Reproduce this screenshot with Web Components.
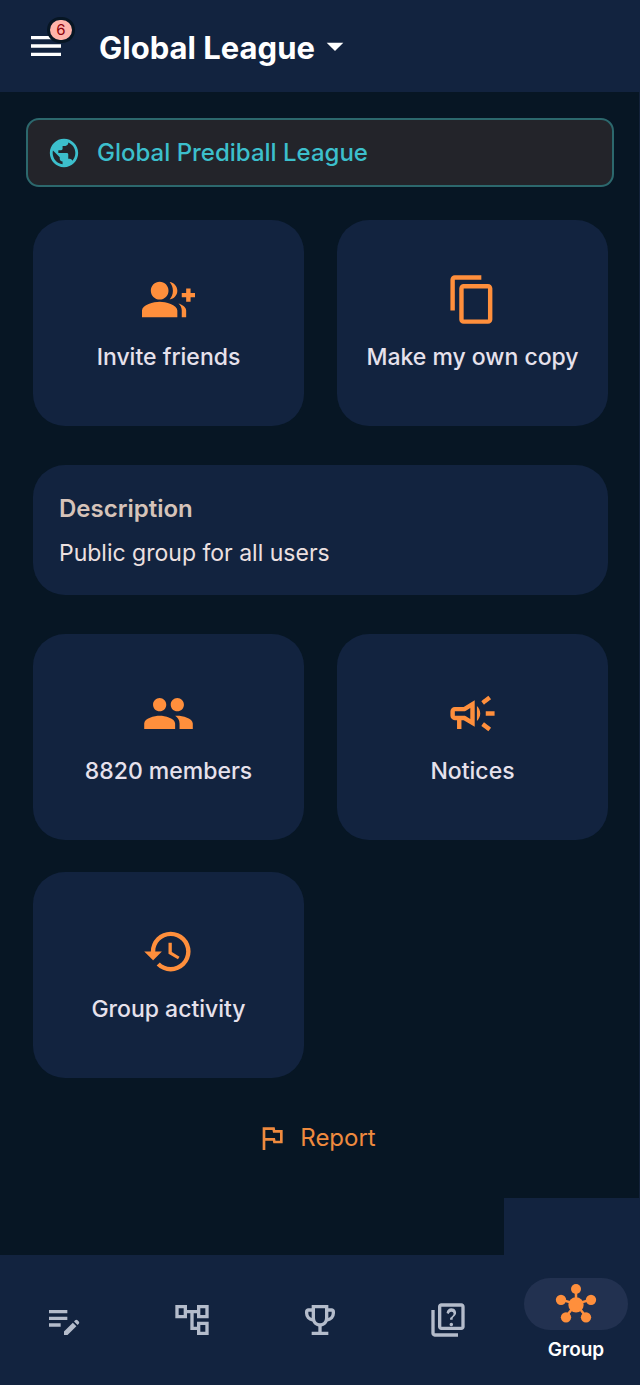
<!DOCTYPE html>
<html lang="en">
<head>
<meta charset="utf-8">
<meta name="viewport" content="width=device-width, initial-scale=1">
<title>Global League</title>
<style>
  :root {
    --bg: #071624;
    --surface: #12233f;
    --accent: #ff8f3c;
    --text: #e6e1ec;
    --muted: #b4bccb;
  }
  body {
    margin: 0;
    min-height: 100vh;
    display: flex;
    flex-direction: column;
    background: var(--bg);
    color: var(--text);
    font-family: Inter, "Open Sans", sans-serif;
  }
  main {
    flex: 1;
    display: flex;
    flex-direction: column;
    padding: 26px 25px 0 26px;
    border-right: 1px solid #13223a;
  }
  .content {
    display: flex;
    flex-direction: column;
    gap: 39px;
    padding: 33px 6px 0 7px;
  }
</style>
</head>
<body>
<league-header count="6">Global League</league-header>
<main>
  <league-banner>Global Prediball League</league-banner>
  <div class="content">
    <tile-grid>
      <action-tile icon="group_add">Invite friends</action-tile>
      <action-tile icon="content_copy">Make my own copy</action-tile>
    </tile-grid>
    <info-card>
      <span slot="title">Description</span>
      Public group for all users
    </info-card>
    <tile-grid>
      <action-tile icon="people">8820 members</action-tile>
      <action-tile icon="campaign">Notices</action-tile>
      <action-tile icon="history">Group activity</action-tile>
    </tile-grid>
  </div>
  <report-button>Report</report-button>
</main>
<bottom-nav>
  <nav-item icon="edit_note" label="Predictions"></nav-item>
  <nav-item icon="account_tree" label="Bracket"></nav-item>
  <nav-item icon="trophy" label="Standings"></nav-item>
  <nav-item icon="quiz" label="Questions"></nav-item>
  <nav-item icon="hub" active>Group</nav-item>
</bottom-nav>

<script>
(function () {
  var ICONS = {
    menu: '<path d="M3 18h18v-2H3v2zm0-5h18v-2H3v2zm0-7v2h18V6H3z"/>',
    arrow: '<path d="M7 10l5 5 5-5z"/>',
    public: '<path d="M12 2C6.48 2 2 6.48 2 12s4.48 10 10 10 10-4.48 10-10S17.52 2 12 2zm-1 17.93c-3.95-.49-7-3.85-7-7.93 0-.62.08-1.21.21-1.79L9 15v1c0 1.1.9 2 2 2v1.93zm6.9-2.54c-.26-.81-1-1.39-1.9-1.39h-1v-3c0-.55-.45-1-1-1H8v-2h2c.55 0 1-.45 1-1V7h2c1.1 0 2-.9 2-2v-.41c2.93 1.19 5 4.06 5 7.41 0 2.08-.8 3.97-2.1 5.39z"/>',
    group_add: '<path d="M22 9V7h-2v2h-2v2h2v2h2v-2h2V9zM8 12c2.21 0 4-1.79 4-4s-1.79-4-4-4-4 1.79-4 4 1.79 4 4 4zm0 1c-2.67 0-8 1.34-8 4v3h16v-3c0-2.66-5.33-4-8-4zm4.51-8.95C13.43 5.11 14 6.49 14 8s-.57 2.89-1.49 3.95C14.47 11.7 16 10.04 16 8s-1.53-3.7-3.49-3.95zm4.02 9.78C17.42 14.66 18 15.7 18 17v3h2v-3c0-1.45-1.59-2.51-3.47-3.17z"/>',
    content_copy: '<path d="M16 1H4c-1.1 0-2 .9-2 2v14h2V3h12V1zm3 4H8c-1.1 0-2 .9-2 2v14c0 1.1.9 2 2 2h11c1.1 0 2-.9 2-2V7c0-1.1-.9-2-2-2zm0 16H8V7h11v14z"/>',
    people: '<path d="M16 11c1.66 0 2.99-1.34 2.99-3S17.66 5 16 5c-1.66 0-3 1.34-3 3s1.34 3 3 3zm-8 0c1.66 0 2.99-1.34 2.99-3S9.66 5 8 5C6.34 5 5 6.34 5 8s1.34 3 3 3zm0 2c-2.33 0-7 1.17-7 3.5V19h14v-2.5c0-2.33-4.67-3.5-7-3.5zm8 0c-.29 0-.62.02-.97.05 1.16.84 1.97 1.97 1.97 3.45V19h6v-2.5c0-2.33-4.67-3.5-7-3.5z"/>',
    campaign: '<path d="M18 11v2h4v-2h-4zM16 17.61c.96.71 2.21 1.65 3.2 2.39.4-.53.8-1.07 1.2-1.6-.99-.74-2.24-1.68-3.2-2.4-.4.54-.8 1.08-1.2 1.61zM20.4 5.6C20 5.07 19.6 4.53 19.2 4c-.99.74-2.24 1.68-3.2 2.4.4.53.8 1.07 1.2 1.6.96-.72 2.21-1.65 3.2-2.4zM4 9c-1.1 0-2 .9-2 2v2c0 1.1.9 2 2 2h1v4h2v-4h1l5 3V6L8 9H4zm5.03 1.71L11 9.53v4.94l-1.97-1.18-.48-.29H4v-2h4.55l.48-.29zM15.5 12c0-1.33-.58-2.53-1.5-3.35v6.69c.92-.81 1.5-2.01 1.5-3.34z"/>',
    history: '<path d="M13 3a9 9 0 0 0-9 9H1l3.89 3.89.07.14L9 12H6c0-3.87 3.13-7 7-7s7 3.13 7 7-3.13 7-7 7c-1.93 0-3.68-.79-4.94-2.06l-1.42 1.42A8.954 8.954 0 0 0 13 21a9 9 0 0 0 0-18zm-1 5v5l4.28 2.54.72-1.21-3.5-2.08V8H12z"/>',
    flag: '<path d="M12.36 6l.4 2H18v6h-3.36l-.4-2H7V6h5.36M14 4H5v17h2v-7h5.6l.4 2h7V6h-5.6L14 4z"/>',
    edit_note: '<path d="M3 10h11v2H3v-2zm0-2h11V6H3v2zm0 8h7v-2H3v2zm15.01-3.13.71-.71a.996.996 0 0 1 1.41 0l.71.71c.39.39.39 1.02 0 1.41l-.71.71-2.12-2.12zm-.71.71-5.3 5.3V21h2.12l5.3-5.3-2.12-2.12z"/>',
    account_tree: '<path d="M22 11V3h-7v3H9V3H2v8h7V8h2v10h4v3h7v-8h-7v3h-2V8h2v3h7zM7 9H4V5h3v4zm10 6h3v4h-3v-4zm0-10h3v4h-3V5z"/>',
    trophy: '<path d="M7 21v-2h4v-3.1q-1.225-.275-2.187-1.037T7.4 12.95q-1.875-.225-3.137-1.637T3 8V7q0-.825.588-1.412T5 5h2V3h10v2h2q.825 0 1.413.588T21 7v1q0 1.9-1.263 3.313T16.6 12.95q-.45 1.15-1.412 1.913T13 15.9V19h4v2zm0-10.2V7H5v1q0 .95.55 1.713T7 10.8m5 3.2q1.25 0 2.125-.875T15 11V5H9v6q0 1.25.875 2.125T12 14m5-3.2q.9-.325 1.45-1.088T19 8V7h-2z"/>',
    quiz: '<path d="M4 6H2v14c0 1.1.9 2 2 2h14v-2H4V6zm16-4H8c-1.1 0-2 .9-2 2v12c0 1.1.9 2 2 2h12c1.1 0 2-.9 2-2V4c0-1.1-.9-2-2-2zm0 14H8V4h12v12zm-6.49-5.16c.41-.73 1.18-1.16 1.63-1.8.48-.68.21-1.94-1.14-1.94-.88 0-1.32.67-1.5 1.23l-1.37-.57C11.51 5.96 12.52 5 13.99 5c1.23 0 2.08.56 2.51 1.26.37.6.58 1.73.01 2.57-.63.93-1.23 1.21-1.56 1.81-.13.24-.18.4-.18 1.18h-1.52c.01-.41-.06-1.08.26-1.67zm-.56 3.79c0-.59.47-1.04 1.05-1.04.59 0 1.04.45 1.04 1.04 0 .58-.44 1.05-1.04 1.05-.58 0-1.05-.47-1.05-1.05z"/>',
    hub: '<g stroke="currentColor" stroke-width="1.5"><path d="M12 3v9M3 9.4l9 2.6 9-2.6M6 19.5l6-7.5 6 7.5" fill="none"/></g>' +
      '<circle cx="12" cy="3" r="3"/><circle cx="3" cy="9.5" r="3.1"/><circle cx="21" cy="9.5" r="3.1"/>' +
      '<circle cx="6" cy="20" r="3.1"/><circle cx="18" cy="20" r="3.1"/><circle cx="12" cy="12.5" r="4.6"/>'
  };

  function icon(name) {
    return '<svg viewBox="0 0 24 24" fill="currentColor" aria-hidden="true">' + (ICONS[name] || "") + "</svg>";
  }

  var BASE =
    "*{box-sizing:border-box;}" +
    "svg{display:block;flex:none;overflow:visible;}" +
    "button,select{margin:0;padding:0;border:0;background:none;color:inherit;font:inherit;cursor:pointer;}";

  // shared shadow root setup
  class LeagueElement extends HTMLElement {
    constructor() {
      super();
      this.attachShadow({ mode: "open" });
    }

    connectedCallback() {
      this.shadowRoot.innerHTML = "<style>" + BASE + this.css() + "</style>" + this.html();
    }
  }

  class LeagueHeader extends LeagueElement {
    css() {
      return (
        ":host{display:block;background:var(--surface);color:#fff;}" +
        "header{display:flex;align-items:center;height:92px;padding:0 26px;}" +
        ".menu{position:relative;margin-right:33px;}" +
        ".menu svg,.league svg{width:40px;height:40px;}" +
        ".badge{position:absolute;top:-9px;right:-9px;min-width:28px;height:26px;border:3px solid var(--bg);" +
        "border-radius:13px;background:#ffb4ab;color:#8c0009;font-size:15px;line-height:20px;text-align:center;}" +
        ".league{display:flex;align-items:center;}" +
        "select{appearance:none;height:48px;padding-top:4px;font-size:31px;font-weight:700;line-height:44px;outline:0;}" +
        ".league svg{pointer-events:none;}"
      );
    }

    html() {
      return (
        '<header><button class="menu" type="button" aria-label="Menu">' + icon("menu") +
        '<span class="badge">' + this.getAttribute("count") + "</span></button>" +
        '<label class="league"><select aria-label="League"><option>' + this.textContent.trim() +
        "</option></select>" + icon("arrow") + "</label></header>"
      );
    }
  }

  class LeagueBanner extends LeagueElement {
    css() {
      return (
        ":host{display:flex;align-items:center;gap:16px;min-height:69px;padding:0 19px;box-sizing:border-box;" +
        "border:2px solid #2c686d;border-radius:13px;background:#23242a;color:#3cbfcc;" +
        "font-size:24px;font-weight:500;line-height:32px;}" +
        "svg{width:34px;height:34px;}"
      );
    }

    html() {
      return icon("public") + "<span><slot></slot></span>";
    }
  }

  class TileGrid extends LeagueElement {
    css() {
      return ":host{display:grid;grid-template-columns:1fr 1fr;gap:32px 33px;}";
    }

    html() {
      return "<slot></slot>";
    }
  }

  class ActionTile extends LeagueElement {
    css() {
      return (
        ":host{display:flex;}" +
        "button{flex:1;display:flex;flex-direction:column;align-items:center;justify-content:center;gap:15px;" +
        "min-height:206px;border-radius:32px;background:var(--surface);" +
        "font-size:23px;font-weight:500;line-height:32px;}" +
        "svg{width:53px;height:53px;color:var(--accent);}"
      );
    }

    html() {
      return '<button type="button">' + icon(this.getAttribute("icon")) + "<span><slot></slot></span></button>";
    }
  }

  class InfoCard extends LeagueElement {
    css() {
      return (
        ":host{display:flex;flex-direction:column;gap:12px;padding:28px 26px 26px;border-radius:32px;" +
        "background:var(--surface);font-size:23px;line-height:32px;}" +
        "h2{margin:0;color:#d6c3b9;font-size:24px;font-weight:600;line-height:32px;}" +
        "p{margin:0;color:#ece0e0;}"
      );
    }

    html() {
      return '<h2><slot name="title"></slot></h2><p><slot></slot></p>';
    }
  }

  class ReportButton extends LeagueElement {
    css() {
      return (
        ":host{display:flex;justify-content:center;padding:36px 0 32px;}" +
        "button{display:flex;align-items:center;gap:12px;height:48px;padding:0 16px 0 8px;" +
        "color:#ef8a3e;font-size:24px;line-height:32px;}" +
        "svg{width:32px;height:32px;}"
      );
    }

    html() {
      return '<button type="button">' + icon("flag") + "<span><slot></slot></span></button>";
    }
  }

  class BottomNav extends LeagueElement {
    css() {
      return (
        ":host{display:flex;flex-direction:column;}" +
        ".ledge{align-self:flex-end;width:136px;height:57px;background:var(--surface);}" +
        "nav{display:grid;grid-template-columns:repeat(5,1fr);height:130px;background:var(--surface);}"
      );
    }

    html() {
      return '<div class="ledge"></div><nav><slot></slot></nav>';
    }
  }

  class NavItem extends LeagueElement {
    css() {
      return (
        ":host{display:flex;color:var(--muted);}" +
        "a{flex:1;display:flex;flex-direction:column;align-items:center;justify-content:center;gap:8px;" +
        "color:inherit;text-decoration:none;font-size:19px;font-weight:600;line-height:24px;}" +
        "svg{width:40px;height:40px;}" +
        ":host([active]){color:#fff;}" +
        ":host([active]) .pill{display:flex;align-items:center;justify-content:center;width:104px;height:52px;" +
        "border-radius:26px;background:#223150;color:var(--accent);}"
      );
    }

    html() {
      var active = this.hasAttribute("active");
      var label = this.getAttribute("label");
      return (
        '<a href="#"' + (label ? ' aria-label="' + label + '"' : "") + (active ? ' aria-current="page"' : "") + ">" +
        '<span class="pill">' + icon(this.getAttribute("icon")) + "</span>" +
        (active ? "<span><slot></slot></span>" : "") + "</a>"
      );
    }
  }

  customElements.define("league-header", LeagueHeader);
  customElements.define("league-banner", LeagueBanner);
  customElements.define("tile-grid", TileGrid);
  customElements.define("action-tile", ActionTile);
  customElements.define("info-card", InfoCard);
  customElements.define("report-button", ReportButton);
  customElements.define("bottom-nav", BottomNav);
  customElements.define("nav-item", NavItem);
})();
</script>
</body>
</html>
